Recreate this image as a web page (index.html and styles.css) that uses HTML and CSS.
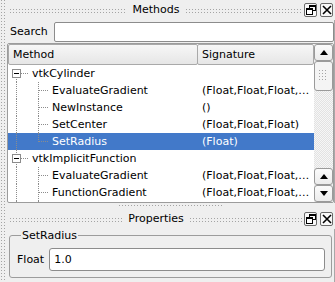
FILE: index.html
```html
<!DOCTYPE html>
<html lang="en">
  <head>
    <meta charset="UTF-8" />
    <title>Methods</title>
    <link rel="stylesheet" href="styles.css">
  </head>
  <body>
    <!-- dock handle -->
    <div class="handle"></div>

    <div class="main">
      <div class="titlebar">
        <span class="grip"></span>
        <span class="title">Methods</span>
        <span class="grip"></span>
        <span class="tb-btns">
          <span class="tb-btn">
            <svg width="10" height="10" viewBox="0 0 10 10">
              <rect x="3.5" y="0.5" width="6" height="5" fill="none" stroke="#000"/>
              <rect x="3" y="0" width="7" height="2" fill="#000"/>
              <rect x="0.5" y="3.5" width="6" height="6" fill="#fff" stroke="#000"/>
              <rect x="0" y="3" width="7" height="2" fill="#000"/>
            </svg>
          </span>
          <span class="tb-btn">
            <svg width="10" height="10" viewBox="0 0 10 10">
              <path d="M1 1 L9 9 M9 1 L1 9" stroke="#000" stroke-width="1.6"/>
            </svg>
          </span>
        </span>
      </div>

      <div class="panel">
        <div class="search-row">
          <label for="search">Search</label>
          <input type="text" id="search" class="search" />
        </div>

        <div class="tree">
          <div class="tree-main">
            <div class="header">
              <div class="hcell hmethod">Method</div>
              <div class="hcell hsig">Signature</div>
            </div>
            <div class="rows">
              <div class="row">
                <div class="cm">
                  <span class="ind first"><span class="box"></span></span>
                  <span class="name">vtkCylinder</span>
                </div>
                <div class="cs"></div>
              </div>
              <div class="row">
                <div class="cm">
                  <span class="ind pass"></span><span class="ind tee"></span>
                  <span class="name">EvaluateGradient</span>
                </div>
                <div class="cs">(Float,Float,Float,…</div>
              </div>
              <div class="row">
                <div class="cm">
                  <span class="ind pass"></span><span class="ind tee"></span>
                  <span class="name">NewInstance</span>
                </div>
                <div class="cs">()</div>
              </div>
              <div class="row">
                <div class="cm">
                  <span class="ind pass"></span><span class="ind tee"></span>
                  <span class="name">SetCenter</span>
                </div>
                <div class="cs">(Float,Float,Float)</div>
              </div>
              <div class="row selected">
                <div class="cm">
                  <span class="ind pass"></span><span class="ind tee last"></span>
                  <span class="name">SetRadius</span>
                </div>
                <div class="cs">(Float)</div>
              </div>
              <div class="row">
                <div class="cm">
                  <span class="ind mid"><span class="box"></span></span>
                  <span class="name">vtkImplicitFunction</span>
                </div>
                <div class="cs"></div>
              </div>
              <div class="row">
                <div class="cm">
                  <span class="ind pass"></span><span class="ind tee"></span>
                  <span class="name">EvaluateGradient</span>
                </div>
                <div class="cs">(Float,Float,Float,…</div>
              </div>
              <div class="row">
                <div class="cm">
                  <span class="ind pass"></span><span class="ind tee"></span>
                  <span class="name">FunctionGradient</span>
                </div>
                <div class="cs">(Float,Float,Float,…</div>
              </div>
              <div class="row">
                <div class="cm">
                  <span class="ind pass"></span><span class="ind tee"></span>
                  <span class="name">NewInstance</span>
                </div>
                <div class="cs">()</div>
              </div>
            </div>
          </div>

          <div class="vscroll">
            <div class="sb-btn"><span class="arrow up"></span></div>
            <div class="thumb"><span class="thumb-grip"></span></div>
            <div class="track"></div>
            <div class="sb-btn"><span class="arrow up"></span></div>
            <div class="sb-btn"><span class="arrow down"></span></div>
          </div>
        </div>
      </div>

      <div class="splitter"><span class="split-grip"></span></div>

      <div class="titlebar">
        <span class="grip"></span>
        <span class="title">Properties</span>
        <span class="grip"></span>
        <span class="tb-btns">
          <span class="tb-btn">
            <svg width="10" height="10" viewBox="0 0 10 10">
              <rect x="3.5" y="0.5" width="6" height="5" fill="none" stroke="#000"/>
              <rect x="3" y="0" width="7" height="2" fill="#000"/>
              <rect x="0.5" y="3.5" width="6" height="6" fill="#fff" stroke="#000"/>
              <rect x="0" y="3" width="7" height="2" fill="#000"/>
            </svg>
          </span>
          <span class="tb-btn">
            <svg width="10" height="10" viewBox="0 0 10 10">
              <path d="M1 1 L9 9 M9 1 L1 9" stroke="#000" stroke-width="1.6"/>
            </svg>
          </span>
        </span>
      </div>

      <div class="panel props">
        <fieldset class="group">
          <legend>SetRadius</legend>
          <div class="field">
            <label for="radius">Float</label>
            <input type="text" id="radius" class="value" value="1.0" />
          </div>
        </fieldset>
      </div>
    </div>
  </body>
</html>
```

FILE: styles.css
```css
* {
  box-sizing: border-box;
}

body {
  margin: 0;
  width: 335px;
  height: 282px;
  overflow: hidden;
  background: #efefef;
  font-family: "DejaVu Sans", sans-serif;
  font-size: 11px;
  color: #000;
  display: flex;
}

/* dotted stipple used by grips */
.handle,
.grip,
.split-grip,
.thumb-grip {
  background-image: conic-gradient(
    from 90deg at 1px 1px,
    transparent 50%,
    #a4a4a4 0 75%,
    transparent 0
  );
  background-size: 3px 3px;
}

.handle {
  width: 7px;
  flex: none;
  background-position: 1px 0;
  background-clip: content-box;
  padding: 0 1px;
}

.main {
  flex: 1;
  display: flex;
  flex-direction: column;
  min-width: 0;
}

/* title bars */
.titlebar {
  height: 20px;
  flex: none;
  display: flex;
  align-items: center;
  padding-left: 3px;
}

.grip {
  flex: 1;
  height: 4px;
  margin-top: 2px;
}

.title {
  padding: 0 6px;
  margin-top: -1px;
}

.tb-btns {
  display: flex;
  gap: 3px;
  padding: 0 2px 0 2px;
}

.tb-btn {
  width: 13px;
  height: 14px;
  border: 1px solid #6a6a6a;
  border-radius: 2px;
  background: #f8f8f8;
  display: flex;
  align-items: center;
  justify-content: center;
}

.panel {
  border-right: 1px solid #a8a8a8;
}

/* search */
.search-row {
  display: flex;
  align-items: center;
  gap: 6px;
  height: 23px;
  padding: 1px 0 1px 3px;
}

.search {
  flex: 1;
  height: 20px;
  border: 1px solid #8c8c8c;
  border-radius: 2px;
  background: #fff;
  font: inherit;
  outline: none;
}

/* method tree */
.tree {
  height: 160px;
  display: flex;
  border: 1px solid #9c9c9c;
  border-radius: 2px;
  background: #fff;
  overflow: hidden;
}

.tree-main {
  flex: 1;
  display: flex;
  flex-direction: column;
  min-width: 0;
}

.header {
  display: flex;
  height: 21px;
  flex: none;
}

.hcell {
  display: flex;
  align-items: center;
  padding-left: 4px;
  background: linear-gradient(#f7f7f7, #e6e6e6);
  border: 1px solid #a9a9a9;
  border-radius: 2px;
}

.hmethod {
  width: 190px;
}

.hsig {
  flex: 1;
  margin-left: -1px;
}

.rows {
  flex: 1;
  overflow: hidden;
}

.row {
  display: flex;
  height: 17px;
  white-space: nowrap;
}

.row.selected {
  background: #4279c9;
  color: #fff;
}

.cm {
  width: 190px;
  display: flex;
  align-items: center;
  height: 100%;
}

.cs {
  flex: 1;
  padding-left: 4px;
  display: flex;
  align-items: center;
}

.name {
  padding-left: 2px;
}

/* tree branch lines */
.ind {
  width: 22px;
  height: 100%;
  flex: none;
  position: relative;
}

.ind.tee {
  width: 20px;
}

.ind::before,
.ind::after {
  content: "";
  position: absolute;
}

.ind.first::before,
.ind.mid::before,
.ind.pass::before,
.ind.tee::before {
  left: 8px;
  width: 1px;
  background: repeating-linear-gradient(#8c8c8c 0 1px, transparent 1px 2px);
}

.ind.first::before {
  top: 12px;
  bottom: 0;
}

.ind.mid::before,
.ind.pass::before,
.ind.tee::before {
  top: 0;
  bottom: 0;
}

.ind.tee.last::before {
  bottom: 8px;
}

.ind.tee::after,
.ind.first::after,
.ind.mid::after {
  top: 8px;
  height: 1px;
  background: repeating-linear-gradient(90deg, #8c8c8c 0 1px, transparent 1px 2px);
}

.ind.tee::after {
  left: 9px;
  width: 10px;
}

.ind.first::after,
.ind.mid::after {
  left: 13px;
  width: 8px;
}

.box {
  position: absolute;
  left: 4px;
  top: 4px;
  width: 9px;
  height: 9px;
  border: 1px solid #8c8c8c;
  background: #fff;
  z-index: 1;
}

.box::after {
  content: "";
  position: absolute;
  left: 1px;
  top: 3px;
  width: 5px;
  height: 1px;
  background: #000;
}

/* scrollbar */
.vscroll {
  width: 19px;
  flex: none;
  display: flex;
  flex-direction: column;
  background: #efefef;
}

.sb-btn {
  height: 17px;
  flex: none;
  border: 1px solid #9a9a9a;
  border-radius: 3px;
  background: linear-gradient(#fbfbfb, #ececec);
  display: flex;
  align-items: center;
  justify-content: center;
}

.arrow {
  width: 0;
  height: 0;
  border-left: 4px solid transparent;
  border-right: 4px solid transparent;
}

.arrow.up {
  border-bottom: 5px solid #000;
}

.arrow.down {
  border-top: 5px solid #000;
}

.thumb {
  height: 30px;
  flex: none;
  border: 1px solid #9a9a9a;
  border-radius: 3px;
  background: #f4f4f4;
  display: flex;
  align-items: center;
  justify-content: center;
}

.thumb-grip {
  width: 9px;
  height: 12px;
}

.track {
  flex: 1;
  background: conic-gradient(#f6f6f6 25%, #e2e2e2 0 50%, #f6f6f6 0 75%, #e2e2e2 0) 0 0 / 2px 2px;
}

/* splitter between docks */
.splitter {
  height: 6px;
  flex: none;
  display: flex;
  justify-content: center;
  align-items: center;
}

.split-grip {
  width: 104px;
  height: 2px;
}

/* properties */
.props {
  flex: 1;
  padding: 0 2px 0 2px;
}

.group {
  margin: 0;
  padding: 6px 6px 6px 7px;
  border: 1px solid #9c9c9c;
  border-radius: 3px;
}

legend {
  padding: 0 1px;
  margin-left: 4px;
}

.field {
  display: flex;
  align-items: center;
  gap: 5px;
}

.value {
  flex: 1;
  height: 23px;
  border: 1px solid #8c8c8c;
  border-radius: 3px;
  background: #fff;
  font: inherit;
  padding: 0 4px;
  outline: none;
}
```
